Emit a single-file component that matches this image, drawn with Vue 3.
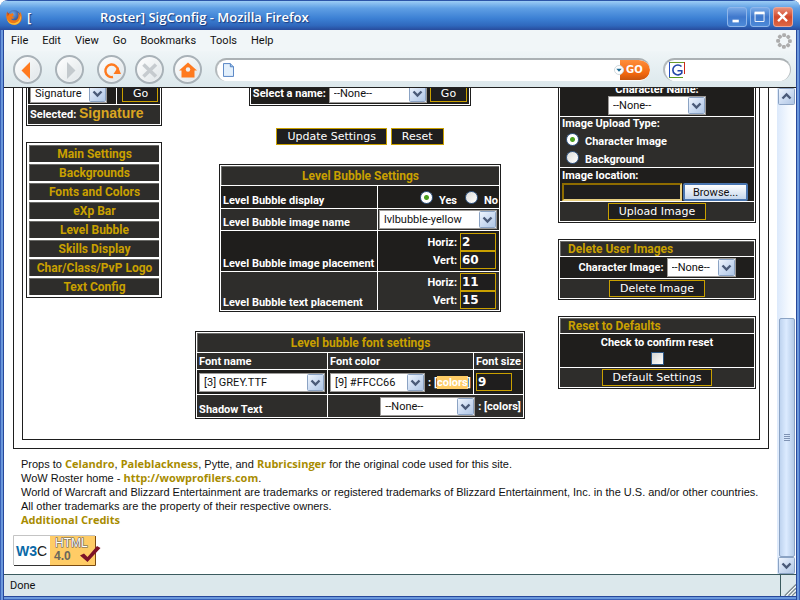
<script setup>
import { h, ref } from 'vue'

const menus = ['File', 'Edit', 'View', 'Go', 'Bookmarks', 'Tools', 'Help']
const sections = [
  'Main Settings', 'Backgrounds', 'Fonts and Colors', 'eXp Bar',
  'Level Bubble', 'Skills Display', 'Char/Class/PvP Logo', 'Text Config',
]
const placements = [
  { label: 'Level Bubble image placement', id: 'image', horiz: '2', vert: '60', tone: 'dark' },
  { label: 'Level Bubble text placement', id: 'text', horiz: '11', vert: '15', tone: 'light' },
]
const display = ref('yes')
const uploadType = ref('character')
const spokes = [0, 45, 90, 135, 180, 225, 270, 315]

const Chevron = (props) =>
  h('svg', { viewBox: '0 0 17 17', 'aria-hidden': 'true' }, [
    h('rect', { x: 0.5, y: 0.5, width: 16, height: 16, rx: 1, fill: 'url(#arrowFace)', stroke: '#8ba3c4' }),
    h('path', {
      d: props.up ? 'M4.5 10.5l4-4 4 4' : 'M4.5 6.5l4 4 4-4',
      fill: 'none', stroke: '#4a5a78', 'stroke-width': 2.4,
    }),
  ])
Chevron.props = { up: Boolean }
</script>

<template>
  <div class="window">
    <svg class="defs" width="0" height="0" aria-hidden="true">
      <defs>
        <linearGradient id="arrowFace" x1="0" y1="0" x2="1" y2="1">
          <stop offset="0" stop-color="#f2f7fe" />
          <stop offset="0.5" stop-color="#cddcf2" />
          <stop offset="1" stop-color="#aec5e4" />
        </linearGradient>
        <radialGradient id="foxGlobe" cx="0.4" cy="0.3" r="0.8">
          <stop offset="0" stop-color="#6fa8e8" />
          <stop offset="1" stop-color="#14286e" />
        </radialGradient>
      </defs>
    </svg>

    <header class="titlebar">
      <svg class="fox" viewBox="0 0 16 16" aria-hidden="true">
        <circle cx="8" cy="7.6" r="6.6" fill="url(#foxGlobe)" />
        <path d="M1.2 2.2C.2 4.6-.2 8.2 1 10.8 2.300 14 5 15.800 8.300 15.800c4.500 0 7.500-3.500 7.500-7.600 0-2.400-.8-4.500-2.200-5.700.6 1.500.6 2.600.3 3.400-.4-1.300-1.300-2-2-2.300 1 2.500.8 5.400-1 6.800-2.300 1.700-5.300.8-6-1 1.300.6 2.600.2 3.600-.7-.9-.3-1.900-.2-2.300-1.100.2-.7 1.600-.7 1.900-1.600-.8-.5-1.400-1.100-1.200-2-1.100.1-1.700.6-2 1C3.700 4.800 2.300 4.800 1.900 5 1.400 4.200 1.200 3 1.200 2.200z" fill="#f07818" />
        <path d="M1 10c1.500 3.400 5 4.700 8 4 3.500-.8 5.300-3.500 5.400-7.500 1.400 4-.8 9-6 9.200C4.500 15.800 1.800 13.500 1 10z" fill="#fbc23a" />
        <path d="M1.200 2.400c.5 1.100 1 1.800 1.900 2.400L1.700 7.500z" fill="#c8400c" />
      </svg>
      <h1><span class="bracket">[</span><span>Roster] SigConfig - Mozilla Firefox</span></h1>
      <div class="controls">
        <button type="button" aria-label="Minimize"><svg viewBox="0 0 20 20"><path d="M5 13h7v3H5z" fill="#fff" /></svg></button>
        <button type="button" aria-label="Maximize"><svg viewBox="0 0 20 20"><path d="M4.500 5v10h10V5z" fill="none" stroke="#fff" /><path d="M4 4h11v3H4z" fill="#fff" /></svg></button>
        <button type="button" class="close" aria-label="Close"><svg viewBox="0 0 20 20"><path d="M4.500 4.500l10 10M14.500 4.500l-10 10" stroke="#fff" stroke-width="2.600" /></svg></button>
      </div>
    </header>

    <nav class="menubar" aria-label="Menu">
      <button v-for="m in menus" :key="m" type="button">{{ m }}</button>
      <svg class="throbber" viewBox="0 0 16 16" aria-hidden="true">
        <rect v-for="a in spokes" :key="a" x="6.200" y="0.200" width="3.800" height="3.800" rx="1.300" fill="#adadad" :transform="`rotate(${a} 8 8)`" />
      </svg>
    </nav>

    <div class="toolbar">
      <div class="group wide">
        <button type="button" class="round" aria-label="Back"><svg viewBox="0 0 29 29"><path d="M8.500 15.500L17 7v17z" fill="#ff7a1f" /></svg></button>
        <button type="button" class="round" aria-label="Forward"><svg viewBox="0 0 29 29"><path d="M20.500 15.500L12 7v17z" fill="#c3c9cd" /></svg></button>
        <button type="button" class="round" aria-label="Reload"><svg viewBox="0 0 29 29"><path d="M16 22A6.300 6.300 0 1 1 21 15.500" fill="none" stroke="#ff7a1f" stroke-width="2.400" /><path d="M16.500 19h7.500L21 12z" fill="#ff7a1f" /></svg></button>
      </div>
      <div class="group">
        <button type="button" class="round" aria-label="Stop"><svg viewBox="0 0 29 29"><path d="M8.500 9.500L21 21.500M21 9.500L8.500 21.500" stroke="#c6cbcf" stroke-width="3.600" /></svg></button>
        <button type="button" class="round" aria-label="Home"><svg viewBox="0 0 29 29"><path d="M6 15.500L15 7.500l9 8h-2.500v7h-13v-7z" fill="#ff7a1f" /><circle cx="15" cy="14.500" r="2.200" fill="#eef1f3" /></svg></button>
      </div>
      <div class="address">
        <svg class="page" viewBox="0 0 12 15" aria-hidden="true"><path d="M.5.500h7.500L11.500 4v10.500H.5z" fill="#e3f0fc" stroke="#4b7cc0" /><path d="M8 .5V4h3.500" fill="#9dc1ea" stroke="#4b7cc0" /></svg>
        <input type="text" aria-label="Address" />
        <button type="button" class="go"><svg viewBox="0 0 10 10" aria-hidden="true"><circle cx="5" cy="5" r="4.500" fill="#fff" stroke="#d0d8dc" /><path d="M2.300 3.800h5.400L5 6.800z" fill="#1a6a94" /></svg>GO</button>
      </div>
      <div class="search">
        <svg viewBox="0 0 16 16" aria-hidden="true"><path d="M0 .5h16" stroke="#6a9a2a" /><path d="M.5 0v16" stroke="#2850c0" /><path d="M0 15.500h14" stroke="#5c9a20" /><path d="M15.500 0v12" stroke="#d02818" /><path d="M12.500 4.500A5 5 0 1 0 12.800 11V8.800H8.500" fill="none" stroke="#2446a8" stroke-width="1.600" /></svg>
        <input type="text" aria-label="Search" />
      </div>
    </div>

    <div class="body">
      <main class="page-view">
        <div class="frame">
          <div class="columns">
            <div class="side">
              <table class="panel">
                <tbody>
                  <tr class="h22 dark">
                    <td><span class="drop sig"><select aria-label="Configuration"><option>Signature</option></select><Chevron class="arrow" /></span></td>
                    <td class="go-cell"><button type="button" class="btn">Go</button></td>
                  </tr>
                  <tr class="h18 light"><td colspan="2" class="low">Selected: <span class="picked">Signature</span></td></tr>
                </tbody>
              </table>
              <ul class="sections">
                <li v-for="s in sections" :key="s"><a href="#">{{ s }}</a></li>
              </ul>
            </div>

            <div class="center">
              <div class="panel inline-panel">
                <div class="row dark h22">
                  <label for="name">Select a name:</label>
                  <span class="drop w98"><select id="name"><option>--None--</option></select><Chevron class="arrow" /></span>
                  <button type="button" class="btn">Go</button>
                </div>
              </div>
              <div class="actions">
                <button type="button" class="btn">Update Settings</button>
                <button type="button" class="btn">Reset</button>
              </div>

              <table class="panel bubble">
                <thead><tr class="h19 light"><th colspan="2">Level Bubble Settings</th></tr></thead>
                <tbody>
                  <tr class="h22 dark">
                    <td class="low">Level Bubble display</td>
                    <td>
                      <div class="radios">
                        <input id="yes" v-model="display" type="radio" value="yes" /><label for="yes">Yes</label>
                        <input id="no" v-model="display" type="radio" value="no" /><label for="no">No</label>
                      </div>
                    </td>
                  </tr>
                  <tr class="h21 light">
                    <td class="low"><label for="bubble-image">Level Bubble image name</label></td>
                    <td><span class="drop w118"><select id="bubble-image"><option>lvlbubble-yellow</option></select><Chevron class="arrow" /></span></td>
                  </tr>
                  <tr v-for="p in placements" :key="p.id" :class="[p.tone, p.id === 'image' ? 'h40' : 'h38']">
                    <td class="low">{{ p.label }}</td>
                    <td>
                      <div class="field"><label :for="p.id + '-h'">Horiz:</label><input :id="p.id + '-h'" type="text" :value="p.horiz" /></div>
                      <div class="field"><label :for="p.id + '-v'">Vert:</label><input :id="p.id + '-v'" type="text" :value="p.vert" /></div>
                    </td>
                  </tr>
                </tbody>
              </table>

              <table class="panel fonts">
                <thead>
                  <tr class="h19 light"><th colspan="3">Level bubble font settings</th></tr>
                </thead>
                <tbody>
                  <tr class="h16 light"><td>Font name</td><td>Font color</td><td>Font size</td></tr>
                  <tr class="h24 dark">
                    <td><span class="drop w126"><select aria-label="Font name"><option>[3] GREY.TTF</option></select><Chevron class="arrow" /></span></td>
                    <td><div class="mix"><span class="drop w95"><select aria-label="Font color"><option>[9] #FFCC66</option></select><Chevron class="arrow" /></span><span>: [<a href="#" class="swatch">colors</a>]</span></div></td>
                    <td><input class="size" type="text" value="9" aria-label="Font size" /></td>
                  </tr>
                  <tr class="h22 light">
                    <td class="low"><label for="shadow">Shadow Text</label></td>
                    <td colspan="2"><div class="mix end"><span class="drop w95"><select id="shadow"><option>--None--</option></select><Chevron class="arrow" /></span><span>: [<a href="#">colors</a>]</span></div></td>
                  </tr>
                </tbody>
              </table>
            </div>

            <div class="side">
              <div class="panel">
                <div class="cell dark h34 stack">
                  <label for="char-name">Character Name:</label>
                  <span class="drop w98"><select id="char-name"><option>--None--</option></select><Chevron class="arrow" /></span>
                </div>
                <div class="cell light h50">
                  <div>Image Upload Type:</div>
                  <div class="choice"><input id="type-char" v-model="uploadType" type="radio" value="character" /><label for="type-char">Character Image</label></div>
                  <div class="choice"><input id="type-bg" v-model="uploadType" type="radio" value="background" /><label for="type-bg">Background</label></div>
                </div>
                <div class="cell dark h33">
                  <label for="location" class="caption">Image location:</label>
                  <div class="upload"><input id="location" type="text" /><button type="button">Browse...</button></div>
                </div>
                <div class="cell light h19 stack"><button type="button" class="btn">Upload Image</button></div>
              </div>

              <section class="panel">
                <h2 class="cell light h15">Delete User Images</h2>
                <div class="row dark h21">
                  <label for="del-image">Character Image:</label>
                  <span class="drop w69"><select id="del-image"><option>--None--</option></select><Chevron class="arrow" /></span>
                </div>
                <div class="cell light h19 stack"><button type="button" class="btn">Delete Image</button></div>
              </section>

              <section class="panel">
                <h2 class="cell light h15">Reset to Defaults</h2>
                <div class="cell dark h33 stack">
                  <label for="confirm">Check to confirm reset</label>
                  <input id="confirm" type="checkbox" />
                </div>
                <div class="cell light h19 stack"><button type="button" class="btn">Default Settings</button></div>
              </section>
            </div>
          </div>
        </div>

        <footer class="credits">
          <p>Props to <a href="#">Celandro</a>, <a href="#">Paleblackness</a>, Pytte, and <a href="#">Rubricsinger</a> for the original code used for this site.</p>
          <p>WoW Roster home - <a href="#">http://wowprofilers.com</a>.</p>
          <p>World of Warcraft and Blizzard Entertainment are trademarks or registered trademarks of Blizzard Entertainment, Inc. in the U.S. and/or other countries.</p>
          <p>All other trademarks are the property of their respective owners.</p>
          <p><a href="#">Additional Credits</a></p>
        </footer>
        <a href="#" class="badge" aria-label="W3C HTML 4.0">
          <svg viewBox="0 0 88 31">
            <rect width="83" height="31" fill="#fff" />
            <rect x="37" width="45" height="30" fill="#ffcc66" />
            <path d="M.5 30V.5H82" fill="none" stroke="#c4c4c4" />
            <path d="M1 30.500h36" stroke="#333" /><path d="M37 30.500h45.500V1" fill="none" stroke="#7a4a10" />
            <text x="3" y="21" font-size="14" font-weight="bold" fill="#0a6aa8" class="sans">W3<tspan fill="#222" font-weight="normal">C</tspan></text>
            <text x="42" y="12" font-size="12" class="sans" fill="#fff" stroke="#555" stroke-width="1" paint-order="stroke">HTML</text>
            <text x="41" y="25" font-size="12" font-weight="bold" class="sans" fill="#6a665c">4.0</text>
            <path d="M67 20.500l4-2 3.500 3.500L84 11l3.500 2L74.500 27z" fill="#7d1228" />
          </svg>
        </a>
      </main>

      <div class="scroll" aria-hidden="true">
        <Chevron class="arrow" up />
        <div class="track"></div>
        <div class="thumb"><i></i><i></i><i></i><i></i></div>
        <Chevron class="arrow" />
      </div>
    </div>

    <div class="status">
      <span>Done</span>
      <svg viewBox="0 0 16 22" aria-hidden="true"><path d="M4 22L16 10M8 22l8-8M12 22l4-4" stroke="#7d8a90" stroke-width="1.500" /><path d="M5.500 22L16 11.500M9.500 22l6.500-6.500M13.500 22l2.500-2.500" stroke="#fff" /></svg>
    </div>
  </div>
</template>

<style>
body { margin: 0; background: #fff; }
</style>

<style scoped>
* { box-sizing: border-box; }
.window {
  display: flex;
  flex-direction: column;
  height: 100vh;
  padding: 0 4px 4px;
  border-radius: 8px 8px 0 0;
  overflow: hidden;
  background:
    linear-gradient(90deg, #3a62b8 0 1px, #6b98dc 1px 3px, #27489b 3px) left / 4px 100% no-repeat,
    linear-gradient(270deg, #3a62b8 0 1px, #6b98dc 1px 3px, #27489b 3px) right / 4px 100% no-repeat,
    linear-gradient(0deg, #3a62b8 0 1px, #6b98dc 1px 3px, #27489b 3px) bottom / 100% 4px no-repeat;
  font: 11px/13px Roboto, "Liberation Sans", Arial, sans-serif;
  color: #111;
}
.defs { position: absolute; }
button, input, select { font: inherit; margin: 0; padding: 0; border: 0; border-radius: 0; color: inherit; background: none; }
svg { display: block; }
p, h1, h2, ul { margin: 0; padding: 0; }

.titlebar {
  display: flex;
  flex: none;
  align-items: center;
  gap: 5px;
  height: 30px;
  margin: 0 -4px;
  padding: 2px 7px 0 6px;
  border-top: 1px solid #2c55a8;
  background: linear-gradient(#9ccdf5, #5f9fe4 25%, #3c80d4 60%, #2f68bd 85%, #284c9c);
}
.fox { width: 16px; height: 16px; }
.titlebar h1 {
  display: flex;
  flex: 1;
  font: 600 13px/20px "Open Sans", "Noto Sans", sans-serif;
  color: #fff;
  text-shadow: 1px 1px 1px #1b3b7c;
}
.bracket { width: 73px; }
.controls { display: flex; gap: 3px; }
.controls button { width: 20px; height: 20px; border: 1px solid #8fb6ea; border-radius: 3px; background: linear-gradient(#79a9e6, #3f78cc 50%, #4d8ad8); }
.controls .close { border-color: #e9a79a; background: linear-gradient(#e8907a, #d2492c 50%, #dd6744); }

.menubar { display: flex; flex: none; align-items: center; gap: 14px; height: 21px; padding: 0 4px 0 7px; background: #f1f6f8; }
.throbber { width: 16px; height: 16px; margin-left: auto; }
.toolbar {
  display: flex;
  flex: none;
  align-items: center;
  gap: 13px;
  height: 37px;
  padding: 0 5px 0 9px;
  border-bottom: 1px solid #222;
  background: linear-gradient(#eff5f7, #dce8ec);
}
.group { display: flex; gap: 9px; }
.wide { gap: 13px; }
.group + .group { margin-left: -4px; }
.round { width: 29px; height: 29px; border: 2px solid #a9b2b8; border-radius: 50%; background: linear-gradient(135deg, #fff, #dfe5e8); box-shadow: inset 0 0 2px #fff; }
.round svg { width: 29px; height: 29px; margin: -2px; }
.address, .search { display: flex; align-items: center; height: 23px; border-top: 2px solid #abb1b4; border-left: 2px solid #b4babd; border-radius: 12px; background: #fff; }
.address { flex: 1; padding-left: 6px; overflow: hidden; }
.address input, .search input { flex: 1; min-width: 0; }
.page { width: 11px; height: 14px; }
.go { display: flex; align-items: center; gap: 2px; width: 30px; height: 20px; margin-left: 5px; font: bold 10px/20px "DejaVu Sans", sans-serif; color: #fff; background: linear-gradient(#ff8e3c, #f0660e 70%, #c65410); border-radius: 0 11px 11px 0; }
.go svg { flex: none; width: 10px; height: 10px; margin-left: -6px; }
.search { width: 128px; padding: 0 6px 0 4px; border-right: 1px solid #b4babd; }
.search svg { width: 16px; height: 16px; }

.body { display: flex; flex: 1; min-height: 0; background: #fff; }
.page-view { display: flex; flex: 1; flex-direction: column; justify-content: flex-end; min-width: 0; padding: 0 8px 8px 9px; overflow: hidden; }
.page-view > * { flex: none; }
.frame { padding: 8px; border: 1px solid #1e1e1e; }
.columns { display: grid; grid-template-columns: 136px 1fr 198px; padding: 3px 3px 20px; border: 1px solid #1e1e1e; font-weight: bold; color: #fff; }
.side { display: flex; flex-direction: column; gap: 16px; }
.center { display: flex; flex-direction: column; align-items: center; gap: 19px; }

.panel { border: 1px solid #1e1e1e; background: #fff; color: #fff; }
table.panel { border-collapse: separate; border-spacing: 1px; }
div.panel, section.panel { display: flex; flex-direction: column; gap: 1px; padding: 1px; }
td, th { height: inherit; padding: 0 2px; text-align: left; vertical-align: middle; white-space: nowrap; }
.dark > td, .dark > th, div.dark { background: #1f1e1c; }
.light > td, .light > th, div.light, h2.light { background: #2e2d2b; }
.h15 { height: 15px; }
.h16 { height: 16px; }
.h18 { height: 18px; }
.h19 { height: 19px; }
.h21 { height: 21px; }
.h22 { height: 22px; }
.h24 { height: 24px; }
.h33 { height: 33px; }
.h34 { height: 34px; }
.h38 { height: 38px; }
.h40 { height: 40px; }
.h50 { height: 50px; }
.low { vertical-align: bottom; padding-bottom: 1px; }
th, h2, .sections a { border: solid #6b6b68; border-width: 1px 0 0 1px; font-size: 12px; line-height: 14px; font-weight: bold; color: #c9a000; }
th { text-align: center; }
.row { display: flex; align-items: center; gap: 3px; padding: 0 2px; }
section .row { justify-content: center; }
.cell { padding: 0 2px; }
h2.cell { padding-left: 7px; }
.stack { display: flex; flex-direction: column; align-items: center; justify-content: center; }

.btn { height: 17px; padding: 0 10px; border: 1px solid #c9a000; background: #1f1e1e; color: #fff; font: 11px/15px "DejaVu Sans", Verdana, sans-serif; white-space: nowrap; }
.actions { display: flex; gap: 4px; margin-top: 3px; }
.go-cell { width: 42px; }
.go-cell .btn { width: 36px; margin-left: 3px; }
td .btn { display: block; }
.picked { font-family: "Liberation Sans", Arial, sans-serif; font-size: 14px; color: #daa520; }
.h18 .low { line-height: 16px; }

.drop { display: inline-grid; align-items: center; height: 19px; vertical-align: middle; border: 1px solid #9c9a98; background: #fff; }
.drop select { grid-area: 1 / 1; width: 100%; min-width: 0; height: 17px; padding: 0 17px 0 4px; appearance: none; font-weight: normal; color: #111; outline: 0; }
.drop .arrow { grid-area: 1 / 1; justify-self: end; width: 17px; height: 17px; pointer-events: none; }
.sig { width: 77px; }
.w69 { width: 69px; }
.w95 { width: 95px; }
.w98 { width: 98px; }
.w118 { width: 118px; }
.w126 { width: 126px; }
td > .drop { display: grid; }

.sections { display: flex; flex-direction: column; gap: 2px; padding: 2px; border: 1px solid #1e1e1e; list-style: none; }
.sections a { display: block; height: 17px; line-height: 16px; text-align: center; text-decoration: none; background: #2e2d2b; }

.bubble td:first-child { width: 156px; }
.bubble td:last-child { width: 121px; padding: 0 1px; }
.radios { display: flex; align-items: center; justify-content: flex-end; gap: 6px; height: 20px; }
.radios label { align-self: flex-end; }
.radios label:first-of-type { margin-right: 2px; }
input[type="radio"] { flex: none; width: 13px; height: 13px; appearance: none; border: 1px solid #3b5f8c; border-radius: 50%; background: linear-gradient(135deg, #dcdcd8, #fff); }
input[type="radio"]:checked { background: radial-gradient(circle, #4aa020 0 2px, #fff 3px); }
.field { display: flex; align-items: center; justify-content: flex-end; gap: 3px; padding-right: 2px; }
.field input, .size { width: 36px; height: 18px; padding-left: 1px; border: 1px solid #c9a000; background: #1f1e1e; font: bold 12px/16px "DejaVu Sans", Verdana, sans-serif; }
.size { display: block; }

.fonts td:nth-child(1) { width: 130px; }
.fonts td:nth-child(2) { width: 145px; }
.fonts td:nth-child(3) { width: 48px; }
.mix { display: flex; align-items: center; gap: 3px; }
.end { justify-content: flex-end; }
.mix a { color: #fff; text-decoration: none; }
.mix .swatch { background: #ffcc66; }

.choice { display: flex; align-items: center; gap: 6px; height: 18px; padding-left: 4px; }
.choice label { align-self: flex-end; }
.caption { display: block; line-height: 15px; }
.upload { display: flex; gap: 1px; }
.upload input { flex: 1; min-width: 0; height: 18px; border: 2px solid; border-color: #8e6c00 #e8cf80 #e8cf80 #8e6c00; background: #1f1e1e; }
.upload button { width: 65px; height: 18px; margin-right: 4px; border: 2px solid #4a76b0; border-radius: 2px; background: linear-gradient(#fff, #c4d6ec); font-weight: normal; line-height: 13px; color: #111; }
input[type="checkbox"] { width: 13px; height: 13px; margin-top: 3px; appearance: none; border: 1px solid #2c5684; background: linear-gradient(135deg, #d4d4d0, #fff); }

.credits { margin: 8px 0; padding-left: 8px; font-family: "Liberation Sans", Arial, sans-serif; line-height: 14px; white-space: nowrap; }
.credits p { height: 14px; }
.credits a { font-family: "Open Sans", "Liberation Sans", sans-serif; font-weight: bold; color: #a88c00; text-decoration: none; }
.badge { display: block; width: 88px; height: 31px; }
.sans { font-family: "Liberation Sans", Arial, sans-serif; }

.scroll { display: flex; flex: none; flex-direction: column; align-items: center; width: 19px; background: linear-gradient(90deg, #dce9fb, #f4f9ff 60%, #fff); }
.scroll .arrow { flex: none; width: 17px; height: 17px; }
.track { flex: 213; }
.thumb { display: flex; flex: 238; flex-direction: column; align-items: center; justify-content: center; gap: 1px; width: 16px; border: 1px solid #8ba3c4; border-radius: 2px; background: linear-gradient(90deg, #bed3ef, #dcebff 45%, #b4cbe8); }
.thumb i { width: 6px; height: 1px; background: #7f93b4; }

.status { display: flex; flex: none; align-items: center; justify-content: space-between; height: 22px; padding-left: 6px; border-top: 1px solid #3b5b5f; background: #dce8ec; }
.status svg { width: 16px; height: 21px; border-left: 1px solid #3b5b5f; }
</style>
